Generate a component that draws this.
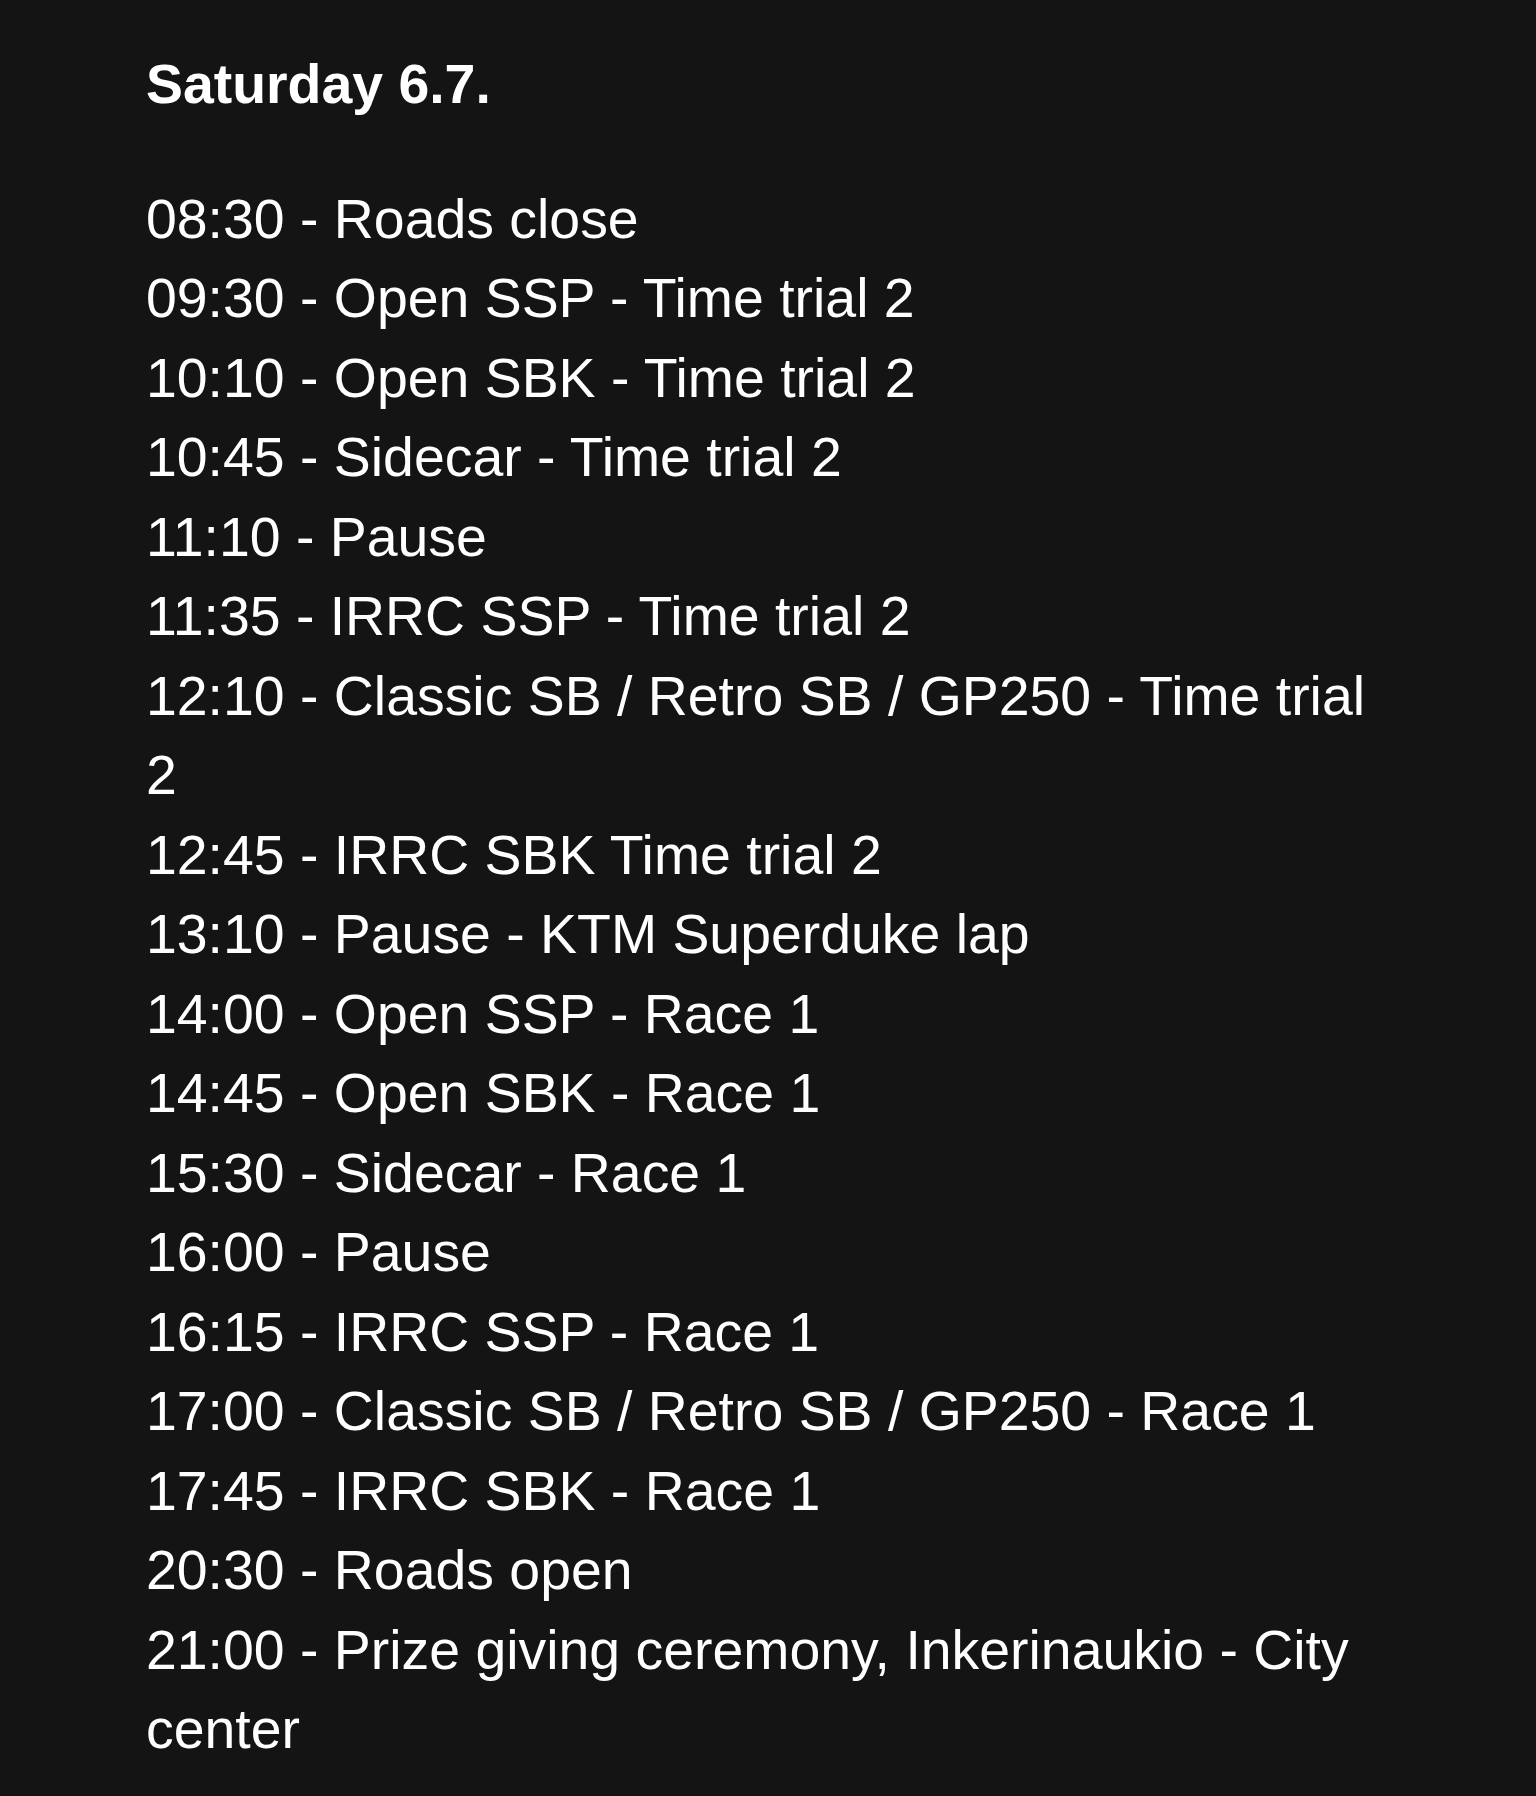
const schedule = [
  "08:30 - Roads close",
  "09:30 - Open SSP - Time trial 2",
  "10:10 - Open SBK - Time trial 2",
  "10:45 - Sidecar - Time trial 2",
  "11:10 - Pause",
  "11:35 - IRRC SSP - Time trial 2",
  "12:10 - Classic SB / Retro SB / GP250 - Time trial 2",
  "12:45 - IRRC SBK Time trial 2",
  "13:10 - Pause - KTM Superduke lap",
  "14:00 - Open SSP - Race 1",
  "14:45 - Open SBK - Race 1",
  "15:30 - Sidecar - Race 1",
  "16:00 - Pause",
  "16:15 - IRRC SSP - Race 1",
  "17:00 - Classic SB / Retro SB / GP250 - Race 1",
  "17:45 - IRRC SBK - Race 1",
  "20:30 - Roads open",
  "21:00 - Prize giving ceremony, Inkerinaukio - City center",
];

export default function App() {
  return (
    <div className="min-h-[1796px] bg-[#141414] px-[146px] pt-[45px] text-white font-['Liberation_Sans',Arial,sans-serif] text-[55.4px] leading-[79.5px]">
      <h2 className="font-bold">Saturday 6.7.</h2>
      <div className="mt-[55px]">
        {schedule.map((line) => (
          <p key={line}>{line}</p>
        ))}
      </div>
    </div>
  );
}
